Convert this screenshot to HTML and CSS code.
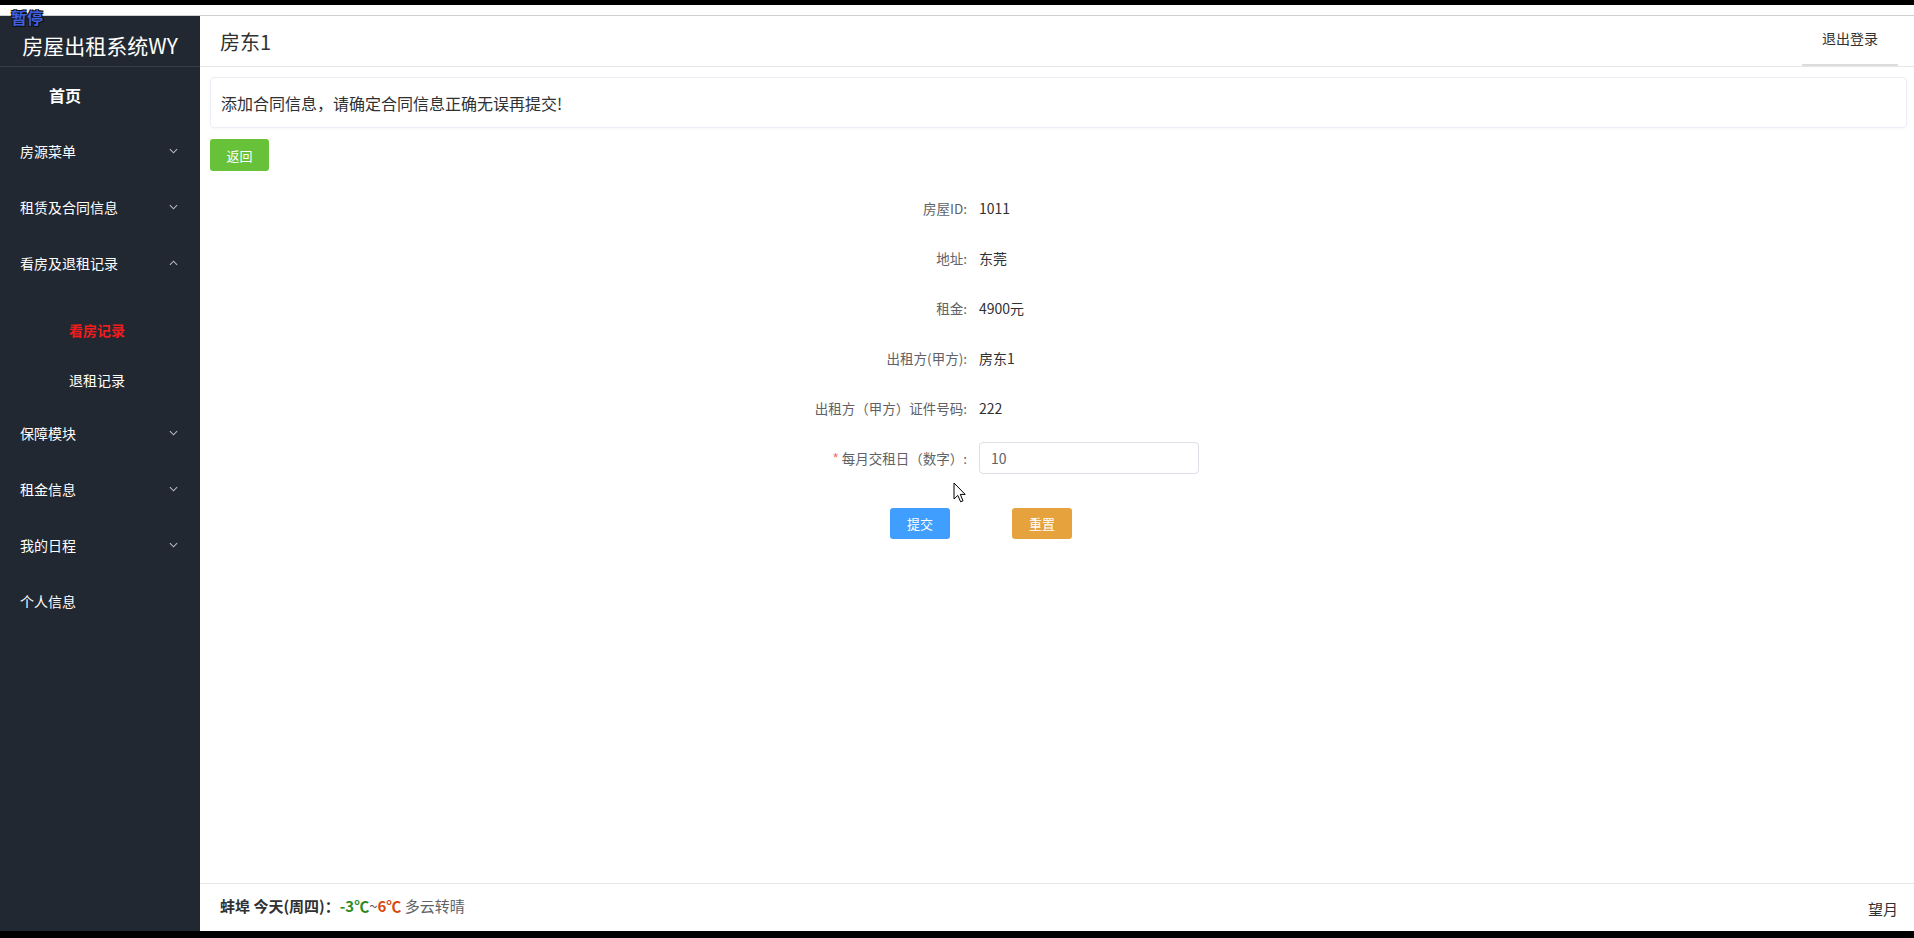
FILE: index.html
```html
<!DOCTYPE html>
<html lang="zh-CN">
<head>
<meta charset="utf-8">
<title>房屋出租系统WY</title>
<link rel="stylesheet" href="styles.css">
</head>
<body>
<div class="screen">
  <div class="video-top"></div>
  <div class="white-strip"></div>
  <div class="app">
    <aside class="sidebar">
      <div class="logo">房屋出租系统WY</div>
      <div class="menu-home">首页</div>
      <div class="menu-item"><span>房源菜单</span><svg class="chev" viewBox="0 0 10 6"><path d="M1 1l4 4 4-4"/></svg></div>
      <div class="menu-item"><span>租赁及合同信息</span><svg class="chev" viewBox="0 0 10 6"><path d="M1 1l4 4 4-4"/></svg></div>
      <div class="menu-item"><span>看房及退租记录</span><svg class="chev" viewBox="0 0 10 6"><path d="M1 5l4-4 4 4"/></svg></div>
      <div class="menu-group">
        <div class="sub-item active">看房记录</div>
        <div class="sub-item">退租记录</div>
      </div>
      <div class="menu-item"><span>保障模块</span><svg class="chev" viewBox="0 0 10 6"><path d="M1 1l4 4 4-4"/></svg></div>
      <div class="menu-item"><span>租金信息</span><svg class="chev" viewBox="0 0 10 6"><path d="M1 1l4 4 4-4"/></svg></div>
      <div class="menu-item"><span>我的日程</span><svg class="chev" viewBox="0 0 10 6"><path d="M1 1l4 4 4-4"/></svg></div>
      <div class="menu-item"><span>个人信息</span></div>
    </aside>
    <div class="main">
      <header class="header">
        <div class="user">房东1</div>
        <div class="logout">退出登录</div>
      </header>
      <div class="content">
        <div class="notice">添加合同信息，请确定合同信息正确无误再提交!</div>
        <button class="btn btn-green btn-back">返回</button>
        <div class="form">
          <div class="row"><div class="label">房屋ID:</div><div class="value">1011</div></div>
          <div class="row"><div class="label">地址:</div><div class="value">东莞</div></div>
          <div class="row"><div class="label">租金:</div><div class="value">4900元</div></div>
          <div class="row"><div class="label">出租方(甲方):</div><div class="value">房东1</div></div>
          <div class="row"><div class="label">出租方（甲方）证件号码:</div><div class="value">222</div></div>
          <div class="row row-last"><div class="label"><span class="req">*</span> 每月交租日（数字）:</div><div class="value"><div class="input">10</div></div></div>
          <div class="actions">
            <button class="btn btn-blue">提交</button>
            <button class="btn btn-orange">重置</button>
          </div>
        </div>
      </div>
      <footer class="footer">
        <div class="weather"><b>蚌埠 今天(周四)：</b><b class="low">-3℃</b><span class="tilde">~</span><b class="high">6℃</b> <span class="desc">多云转晴</span></div>
        <div class="sign">望月</div>
      </footer>
    </div>
  </div>
  <div class="video-bottom"></div>
  <div class="pause">暂停</div>
  <svg class="cursor" viewBox="0 0 13 21"><path d="M1 1 L1 17 L4.8 13.4 L7.6 19.8 L10 18.8 L7.3 12.4 L12.2 12.4 Z"/></svg>
</div>
</body>
</html>
```

FILE: styles.css
```css
* { box-sizing: border-box; }
html, body { margin: 0; padding: 0; }
body {
  background: #000;
  font-family: "Noto Sans CJK SC", "Noto Sans", "Liberation Sans", sans-serif;
  color: #303133;
}
.screen {
  position: relative;
  width: 1914px;
  height: 938px;
  display: flex;
  flex-direction: column;
  overflow: hidden;
}
.video-top { height: 5px; background: #000; }
.white-strip { height: 11px; background: #fff; border-bottom: 1px solid #d0d0d0; }
.video-bottom { flex: 1; background: #000; }
.app {
  height: 915px;
  display: flex;
}
.sidebar {
  width: 200px;
  background: #222831;
  color: #fff;
  display: flex;
  flex-direction: column;
}
.logo {
  height: 51px;
  border-bottom: 1px solid #353c46;
  display: flex;
  align-items: center;
  justify-content: center;
  font-size: 21px;
  line-height: 24px;
  padding-top: 7px;
}
.menu-home {
  height: 56px;
  display: flex;
  align-items: center;
  padding-left: 49px;
  font-size: 16px;
  font-weight: bold;
}
.menu-item {
  height: 56px;
  display: flex;
  align-items: center;
  justify-content: space-between;
  padding: 0 22px 0 20px;
  font-size: 14px;
}
.chev {
  width: 9px;
  height: 6px;
  fill: none;
  stroke: #b9bcc2;
  stroke-width: 1.2;
}
.menu-group { padding-top: 14px; }
.sub-item {
  height: 50px;
  display: flex;
  align-items: center;
  padding-left: 69px;
  font-size: 14px;
}
.sub-item.active { color: #f01c1c; font-weight: bold; }

.main {
  flex: 1;
  background: #fff;
  display: flex;
  flex-direction: column;
}
.header {
  height: 51px;
  border-bottom: 1px solid #e6e6e6;
  display: flex;
  align-items: stretch;
  justify-content: space-between;
  padding: 0 16px 0 20px;
}
.user {
  display: flex;
  align-items: center;
  font-size: 20px;
  color: #303133;
}
.logout {
  width: 96px;
  display: flex;
  align-items: center;
  justify-content: center;
  font-size: 14px;
  color: #303133;
  border-bottom: 2px solid #dcdcdc;
  padding-bottom: 4px;
}
.content {
  flex: 1;
  padding: 10px 7px 0 10px;
}
.notice {
  height: 51px;
  border: 1px solid #ebeef5;
  border-radius: 4px;
  display: flex;
  align-items: center;
  padding-left: 10px;
  font-size: 16px;
  color: #303133;
  box-shadow: 0 1px 3px rgba(0,0,0,0.04);
}
.btn {
  border: none;
  border-radius: 3px;
  color: #fff;
  font-family: inherit;
  font-size: 13px;
  padding: 0;
  display: flex;
  align-items: center;
  justify-content: center;
}
.btn-back { margin-top: 11px; }
.btn-green { background: #67c23a; width: 59px; height: 32px; }
.btn-blue { background: #409eff; width: 60px; height: 31px; }
.btn-orange { background: #e6a23c; width: 60px; height: 31px; }
.form { margin-top: 21px; }
.row {
  display: grid;
  grid-template-columns: 757px 1fr;
  column-gap: 12px;
  height: 32px;
  align-items: center;
  margin-bottom: 18px;
}
.row-last { margin-bottom: 34px; }
.label {
  text-align: right;
  font-size: 13.5px;
  color: #606266;
}
.req { color: #f56c6c; }
.value {
  font-size: 14px;
  color: #303133;
}
.input {
  width: 220px;
  height: 32px;
  border: 1px solid #dcdfe6;
  border-radius: 4px;
  display: flex;
  align-items: center;
  padding-left: 11px;
  color: #606266;
  font-size: 14px;
}
.actions {
  display: flex;
  gap: 62px;
  padding-left: 680px;
}
.footer {
  height: 48px;
  border-top: 1px solid #e6e6e6;
  display: flex;
  align-items: center;
  justify-content: space-between;
  padding: 0 16px 0 20px;
}
.weather { font-size: 15px; color: #303133; padding-bottom: 5px; }
.weather b { font-weight: bold; }
.low { color: #2e8b1e; }
.high { color: #d9480f; }
.tilde { color: #555; }
.desc { color: #606266; }
.sign { font-size: 15px; color: #303133; padding-top: 2px; }

.pause {
  position: absolute;
  left: 11px;
  top: 9px;
  font-size: 16px;
  line-height: 16px;
  font-weight: bold;
  color: #3d5fe0;
  text-shadow: -1px -1px 0 #111, 1px -1px 0 #111, -1px 1px 0 #111, 1px 1px 0 #111;
}
.cursor {
  position: absolute;
  left: 953px;
  top: 482px;
  width: 13px;
  height: 21px;
  fill: #fff;
  stroke: #000;
  stroke-width: 1;
}
```
